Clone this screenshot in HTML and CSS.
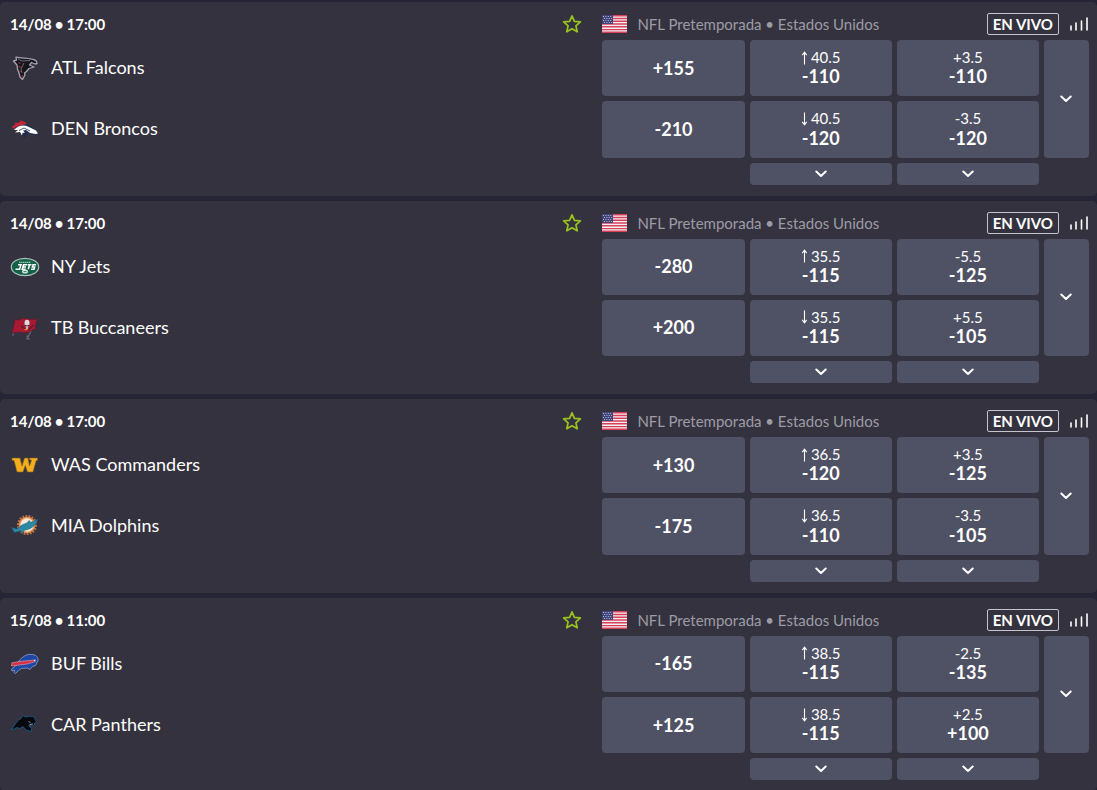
FILE: index.html
```html
<!DOCTYPE html>
<html lang="es">
<head>
    <meta charset="UTF-8">
    <meta name="viewport" content="width=device-width, initial-scale=1.0">
    <title>NFL Pretemporada</title>
    <link rel="stylesheet" href="styles.css">
</head>
<body>

    <svg class="sprite" aria-hidden="true">
        <symbol id="star" viewBox="0 0 20 20">
            <path d="M10 1.8l2.4 5.5 6 .6-4.5 4 1.3 5.9-5.2-3.1-5.2 3.1 1.3-5.9-4.5-4 6-.6z" fill="none" stroke="#9ac31c" stroke-width="1.7" stroke-linejoin="round"/>
        </symbol>
        <symbol id="flag" viewBox="0 0 25 18">
            <path fill="#f3eef2" d="M0 0h25v18H0z"/>
            <path stroke="#d8405a" stroke-width="1.4" d="M0 .7h25M0 3.5h25M0 6.3h25M0 9h25M0 11.8h25M0 14.6h25M0 17.3h25"/>
            <path fill="#3f4479" d="M0 0h11v9H0z"/>
            <path stroke="#b9bbd4" stroke-width="1" stroke-dasharray="1 1.4" d="M1 1.5h9.5M2 3.5h8M1 5.5h9.5M2 7.5h8"/>
        </symbol>
        <symbol id="signal" viewBox="0 0 19 14">
            <path stroke="#fff" stroke-width="1.6" stroke-linecap="round" d="M1 9v4M6 6v7M11.500 4v9M17 1v12"/>
        </symbol>
        <symbol id="chevron" viewBox="0 0 12 8">
            <path fill="none" stroke="#fff" stroke-width="2" stroke-linecap="round" stroke-linejoin="round" d="M1.3 1.5L6 6l4.7-4.5"/>
        </symbol>
        <symbol id="up" viewBox="0 0 7 14">
            <path fill="none" stroke="#fff" stroke-width="1.1" d="M3.5 13.5V1.5M1.3 4.2L3.5 1.2l2.2 3"/>
        </symbol>
        <symbol id="down" viewBox="0 0 7 14">
            <path fill="none" stroke="#fff" stroke-width="1.1" d="M3.5.5v12M1.3 9.8l2.2 3 2.2-3"/>
        </symbol>

        <symbol id="falcons" viewBox="0 0 30 30">
            <path fill="#17151c" stroke="#a3a2ae" stroke-width="1.3" stroke-linejoin="round" d="M3.5 8l3-.8-.5-3c5 1.500 11 .3 15.500 2 3.500.3 5.500 1.800 5.500 4.300l-2 .5-3.500-1.500-2 2.500 4.500 2-5 1.500-2.500 3-2 1.500.5 2-2.500 4.500-2.500-2.500-1-4-1.500-4-.5-4z"/>
            <path fill="none" stroke="#77757f" stroke-width=".9" d="M8 6l4 2 8-.5M14 10l-3 6 1 4"/>
            <path fill="none" stroke="#a02a3c" stroke-width="1.3" d="M8.500 9.500l2 1M8.500 13.500l2 .5M9.500 18l1.500.5M12.500 22l-.5 2.500"/>
        </symbol>
        <symbol id="broncos" viewBox="0 0 30 30">
            <path fill="#1d2c4e" d="M2 13l6-3 9 0 6 4 5 4v2l-5 1-6-2-2 5-2-1-2-4-4-1 2-4z"/>
            <path fill="#c3263c" d="M1.5 13c2-1.5 3-2.5 4-2.5l-1-2 4 .5 2-2.5c3 .5 5 1.5 6.5 3.5l-7 1.5-5 2 .5 2z"/>
            <path fill="#fff" d="M4 16c4-4.500 9-5.500 14-3.500l8 4 2 3-2.500.5-5.500-1-4-3-3 .5 2 2-2.500.5-.5 2.500-2-3.500-5 .5 3-2.500z"/>
            <path fill="none" stroke="#1d2c4e" stroke-width=".8" d="M9 16.500l5-2.500 6 3"/>
        </symbol>
        <symbol id="jets" viewBox="0 0 30 30">
            <ellipse cx="15" cy="15" rx="13.700" ry="8.700" fill="#136147" stroke="#adc0bd" stroke-width="1.200"/>
            <path stroke="#c9dcd5" stroke-width="1" stroke-dasharray="1.5 .5" d="M9 10.300h12"/>
            <path fill="none" stroke="#fff" stroke-width="1.500" d="M8 12.800h3l-1.500 4.500H5.500M17 12.800h-3.500l-1.300 4.500h3.500M13 15h3M17.500 12.800h4M19.500 12.800l-1.200 4.500M26 12.800h-3l-.6 2.200h2.200l-.6 2.300h-3"/>
            <ellipse cx="15" cy="19.600" rx="3" ry="2" fill="#d9e8e2"/>
            <path stroke="#136147" stroke-width=".8" d="M13.500 19.600h3"/>
        </symbol>
        <symbol id="buccaneers" viewBox="0 0 30 30">
            <path stroke="#666675" stroke-width="1.5" stroke-linecap="round" d="M3 18v4M17 23l2 3M21 18l-4 8"/>
            <path fill="#a91931" stroke="#5b202f" stroke-width=".8" d="M5 6.500c4 2 7-2 11-1 5 1 8 1 11.500.5l-2.500 7 1 3.500c-4-1-5 3-9 3-5 1-9-2-15 1z"/>
            <ellipse cx="17" cy="10" rx="2.500" ry="3.300" fill="#dadae2"/>
            <path fill="#b9a8b0" d="M15.500 12h3l-.5 4h-2z"/>
            <path stroke="#30212a" stroke-width="1" d="M15 12.500h1.500M17.500 12.500h1.500M11 13l4 3M23 12l-4 5"/>
            <path stroke="#e48b24" stroke-width="1.3" d="M14.500 16.500h3"/>
        </symbol>
        <symbol id="commanders" viewBox="0 0 30 30">
            <path fill="#f5ae1b" stroke="#7c5a2c" stroke-width=".6" d="M2 8h8l2 8 2.500-8H18l1.500 8 2-6h-2V8h8v2.500h-1.300L23 22h-5.500L15.300 15.500 13 22H7L4 10.500H2z"/>
        </symbol>
        <symbol id="dolphins" viewBox="0 0 30 30">
            <circle cx="17" cy="14" r="8.800" fill="none" stroke="#b8744f" stroke-width="2.600" stroke-dasharray="1.800 1.250"/>
            <circle cx="17" cy="14" r="7.500" fill="#f4e9df" stroke="#ea9147" stroke-width="1.600"/>
            <path fill="#2c88a3" stroke="#1b5970" stroke-width=".5" d="M1.500 16.500l5.500 1.500c3-3 6-5 10-6l2-2.500 2 1.800 7-3-2.500 5c-3 3.500-7 5.500-11 6l-2.500 3.200-1-2.500-3.500.5-3 1-1-1.500z"/>
        </symbol>
        <symbol id="bills" viewBox="0 0 30 30">
            <path fill="#2147a4" stroke="#8e9fc8" stroke-width=".8" stroke-linejoin="round" d="M9 12c3-4 8-7.500 13-6.500 5 .3 6.500 3.500 6 6.500l-2.500 4.500-3 1-2.500 3-2.500-1.500-6 .5-3 2-3 3-1.500-1 .5-2.500-2.500 1-.5-2 4-3z"/>
            <path fill="#d92d40" stroke="#e1c5cf" stroke-width=".5" d="M2 13.800l8-1.300 14.500-1.500 1 1.500-8.500 2.500L1.500 17z"/>
            <path stroke="#fff" d="M24 11.500l1.500-.5"/>
        </symbol>
        <symbol id="panthers" viewBox="0 0 30 30">
            <path fill="#07080e" stroke="#17598a" stroke-width=".9" stroke-linejoin="round" d="M1.500 20C5 14 8 10 11 8.500L12.500 5.500l3 1.500c4-1 7-1 9 .5l1 3 1 1-2 1.500 0 2-2 1-3-2-.5 2 2.500 2.500-.5 3-5-1.500-3-3.500-3 2-3-1-4 2-1-1z"/>
            <path fill="none" stroke="#a5a7af" stroke-width=".9" d="M18.5 11.500l2 1M20 14.500l3-.5"/>
        </symbol>
    </svg>

    <main class="events">

        <article class="event">
            <section class="event-info">
                <div class="event-bar">
                    <time class="event-time"><span>14/08</span><span>•</span><span>17:00</span></time>
                    <button class="favorite" aria-label="Favorito"><svg><use href="#star"/></svg></button>
                </div>
                <div class="teams">
                    <div class="team"><svg class="team-logo"><use href="#falcons"/></svg><span>ATL Falcons</span></div>
                    <div class="team"><svg class="team-logo"><use href="#broncos"/></svg><span>DEN Broncos</span></div>
                </div>
            </section>
            <section class="event-markets">
                <div class="event-bar">
                    <svg class="flag"><use href="#flag"/></svg>
                    <span class="league">NFL Pretemporada • Estados Unidos</span>
                    <span class="live">EN VIVO</span>
                    <svg class="signal"><use href="#signal"/></svg>
                </div>
                <div class="odds">
                    <button class="odd"><b>+155</b></button>
                    <button class="odd"><span class="line"><svg class="arrow"><use href="#up"/></svg>40.5</span><b>-110</b></button>
                    <button class="odd"><span class="line">+3.5</span><b>-110</b></button>
                    <button class="more more-side" aria-label="Más mercados"><svg><use href="#chevron"/></svg></button>
                    <button class="odd"><b>-210</b></button>
                    <button class="odd"><span class="line"><svg class="arrow"><use href="#down"/></svg>40.5</span><b>-120</b></button>
                    <button class="odd"><span class="line">-3.5</span><b>-120</b></button>
                    <button class="more more-total" aria-label="Más totales"><svg><use href="#chevron"/></svg></button>
                    <button class="more" aria-label="Más hándicaps"><svg><use href="#chevron"/></svg></button>
                </div>
            </section>
        </article>

        <article class="event">
            <section class="event-info">
                <div class="event-bar">
                    <time class="event-time"><span>14/08</span><span>•</span><span>17:00</span></time>
                    <button class="favorite" aria-label="Favorito"><svg><use href="#star"/></svg></button>
                </div>
                <div class="teams">
                    <div class="team"><svg class="team-logo"><use href="#jets"/></svg><span>NY Jets</span></div>
                    <div class="team"><svg class="team-logo"><use href="#buccaneers"/></svg><span>TB Buccaneers</span></div>
                </div>
            </section>
            <section class="event-markets">
                <div class="event-bar">
                    <svg class="flag"><use href="#flag"/></svg>
                    <span class="league">NFL Pretemporada • Estados Unidos</span>
                    <span class="live">EN VIVO</span>
                    <svg class="signal"><use href="#signal"/></svg>
                </div>
                <div class="odds">
                    <button class="odd"><b>-280</b></button>
                    <button class="odd"><span class="line"><svg class="arrow"><use href="#up"/></svg>35.5</span><b>-115</b></button>
                    <button class="odd"><span class="line">-5.5</span><b>-125</b></button>
                    <button class="more more-side" aria-label="Más mercados"><svg><use href="#chevron"/></svg></button>
                    <button class="odd"><b>+200</b></button>
                    <button class="odd"><span class="line"><svg class="arrow"><use href="#down"/></svg>35.5</span><b>-115</b></button>
                    <button class="odd"><span class="line">+5.5</span><b>-105</b></button>
                    <button class="more more-total" aria-label="Más totales"><svg><use href="#chevron"/></svg></button>
                    <button class="more" aria-label="Más hándicaps"><svg><use href="#chevron"/></svg></button>
                </div>
            </section>
        </article>

        <article class="event">
            <section class="event-info">
                <div class="event-bar">
                    <time class="event-time"><span>14/08</span><span>•</span><span>17:00</span></time>
                    <button class="favorite" aria-label="Favorito"><svg><use href="#star"/></svg></button>
                </div>
                <div class="teams">
                    <div class="team"><svg class="team-logo"><use href="#commanders"/></svg><span>WAS Commanders</span></div>
                    <div class="team"><svg class="team-logo"><use href="#dolphins"/></svg><span>MIA Dolphins</span></div>
                </div>
            </section>
            <section class="event-markets">
                <div class="event-bar">
                    <svg class="flag"><use href="#flag"/></svg>
                    <span class="league">NFL Pretemporada • Estados Unidos</span>
                    <span class="live">EN VIVO</span>
                    <svg class="signal"><use href="#signal"/></svg>
                </div>
                <div class="odds">
                    <button class="odd"><b>+130</b></button>
                    <button class="odd"><span class="line"><svg class="arrow"><use href="#up"/></svg>36.5</span><b>-120</b></button>
                    <button class="odd"><span class="line">+3.5</span><b>-125</b></button>
                    <button class="more more-side" aria-label="Más mercados"><svg><use href="#chevron"/></svg></button>
                    <button class="odd"><b>-175</b></button>
                    <button class="odd"><span class="line"><svg class="arrow"><use href="#down"/></svg>36.5</span><b>-110</b></button>
                    <button class="odd"><span class="line">-3.5</span><b>-105</b></button>
                    <button class="more more-total" aria-label="Más totales"><svg><use href="#chevron"/></svg></button>
                    <button class="more" aria-label="Más hándicaps"><svg><use href="#chevron"/></svg></button>
                </div>
            </section>
        </article>

        <article class="event">
            <section class="event-info">
                <div class="event-bar">
                    <time class="event-time"><span>15/08</span><span>•</span><span>11:00</span></time>
                    <button class="favorite" aria-label="Favorito"><svg><use href="#star"/></svg></button>
                </div>
                <div class="teams">
                    <div class="team"><svg class="team-logo"><use href="#bills"/></svg><span>BUF Bills</span></div>
                    <div class="team"><svg class="team-logo"><use href="#panthers"/></svg><span>CAR Panthers</span></div>
                </div>
            </section>
            <section class="event-markets">
                <div class="event-bar">
                    <svg class="flag"><use href="#flag"/></svg>
                    <span class="league">NFL Pretemporada • Estados Unidos</span>
                    <span class="live">EN VIVO</span>
                    <svg class="signal"><use href="#signal"/></svg>
                </div>
                <div class="odds">
                    <button class="odd"><b>-165</b></button>
                    <button class="odd"><span class="line"><svg class="arrow"><use href="#up"/></svg>38.5</span><b>-115</b></button>
                    <button class="odd"><span class="line">-2.5</span><b>-135</b></button>
                    <button class="more more-side" aria-label="Más mercados"><svg><use href="#chevron"/></svg></button>
                    <button class="odd"><b>+125</b></button>
                    <button class="odd"><span class="line"><svg class="arrow"><use href="#down"/></svg>38.5</span><b>-115</b></button>
                    <button class="odd"><span class="line">+2.5</span><b>+100</b></button>
                    <button class="more more-total" aria-label="Más totales"><svg><use href="#chevron"/></svg></button>
                    <button class="more" aria-label="Más hándicaps"><svg><use href="#chevron"/></svg></button>
                </div>
            </section>
        </article>

    </main>

</body>
</html>
```
FILE: styles.css
```css
* {
    box-sizing: border-box;
}

body {
    font-family: 'Lato', sans-serif;
    font-size: 15px;
    background-color: #262535;
    color: #fff;
    margin: 0;
}

button {
    font-family: inherit;
    color: inherit;
    border: none;
    padding: 0;
    cursor: pointer;
}

.sprite {
    display: none;
}

.events {
    display: flex;
    flex-direction: column;
    gap: 5px;
    padding-top: 2px;
}

.event {
    display: grid;
    grid-template-columns: 20fr 17fr;
    column-gap: 20px;
    padding: 10px 8px 11px 10px;
    background-color: #34323e;
    border-radius: 5px;
}

.event-bar {
    display: flex;
    align-items: center;
    height: 24px;
    margin-bottom: 4px;
}

.event-time {
    display: flex;
    gap: 3px;
    font-weight: 700;
}

.favorite {
    display: flex;
    margin-left: auto;
    background: none;
}

.favorite svg {
    width: 20px;
    height: 20px;
}

.teams {
    display: flex;
    flex-direction: column;
    gap: 5px;
}

.team {
    display: flex;
    align-items: center;
    gap: 11px;
    height: 56px;
    font-size: 18px;
}

.team span {
    padding-bottom: 2px;
}

.team-logo {
    width: 30px;
    height: 30px;
}

.flag {
    width: 25px;
    height: 18px;
    margin-right: 10px;
}

.league {
    color: #9c9ca5;
}

.live {
    margin-left: auto;
    padding: 0 5px;
    border: 1px solid #c4c4cc;
    border-radius: 2px;
    line-height: 20px;
    font-weight: 700;
}

.signal {
    width: 19px;
    height: 14px;
    margin-left: 11px;
}

.odds {
    display: grid;
    grid-template-columns: repeat(3, 1fr) 45px;
    gap: 5px;
}

.odd,
.more {
    display: flex;
    align-items: center;
    justify-content: center;
    background-color: #4f5164;
    border-radius: 4px;
}

.odd {
    flex-direction: column;
    padding: 9px;
    font-size: 18px;
    line-height: 1.16;
}

.odd:hover,
.more:hover {
    background-color: #5d5f75;
}

.line {
    display: flex;
    align-items: center;
    gap: 3px;
    font-size: 15px;
}

.arrow {
    width: 7px;
    height: 14px;
}

.more {
    height: 22px;
}

.more svg {
    width: 12px;
    height: 8px;
}

.more-side {
    grid-column: 4;
    grid-row: 1 / 3;
    height: auto;
}

.more-total {
    grid-column: 2;
}
```
